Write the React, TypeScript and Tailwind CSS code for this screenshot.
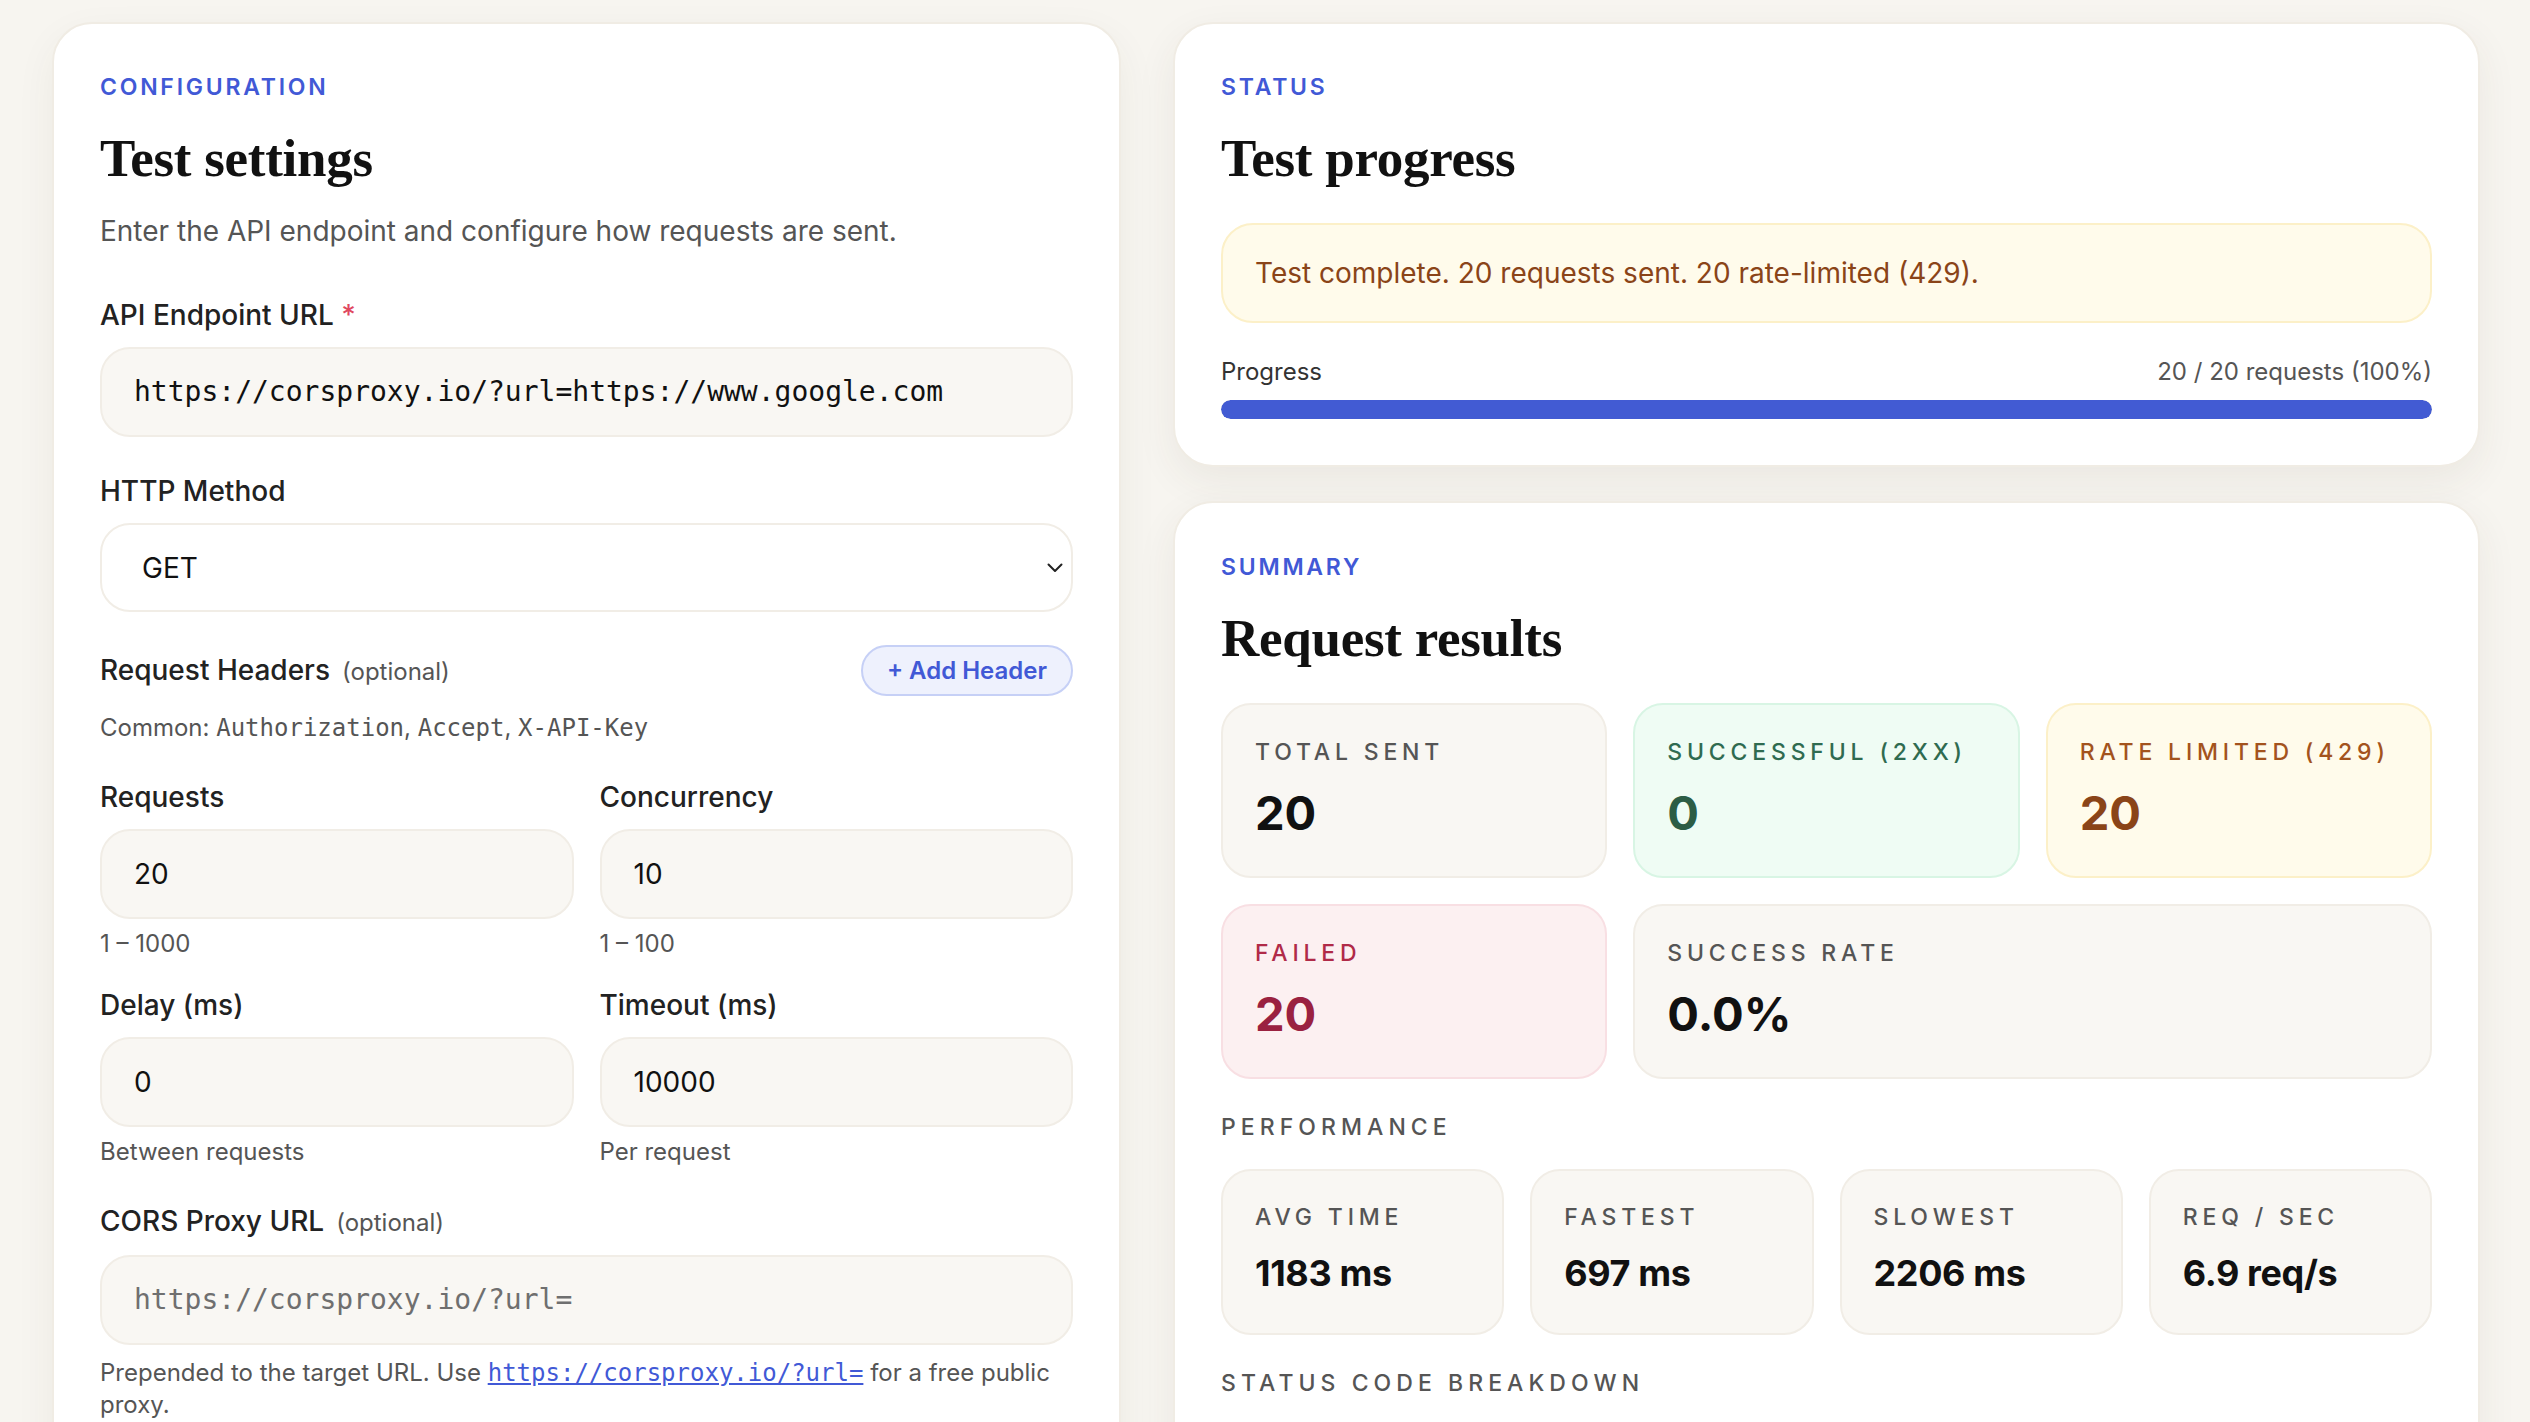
import React from "react";

const sans = { fontFamily: "Inter, 'Noto Sans', sans-serif" };
const mono = { fontFamily: "'DejaVu Sans Mono', monospace" };

const Eyebrow = ({ children }: { children: React.ReactNode }) => (
  <div className="text-[23px] leading-[32px] font-semibold tracking-[0.12em] text-[#4159d6] uppercase">{children}</div>
);

const Title = ({ children }: { children: React.ReactNode }) => (
  <h2 className="mt-[25px] text-[53px] leading-[61px] font-bold tracking-[-0.005em] text-[#111]" style={{ fontFamily: "'Liberation Serif', 'DejaVu Serif', serif" }}>
    {children}
  </h2>
);

const Label = ({ children, optional }: { children: React.ReactNode; optional?: boolean }) => (
  <div className="text-[28px] leading-[36px] font-medium text-[#222]">
    {children}
    {optional && <span className="ml-[12px] text-[24px] font-normal text-[#555]">(optional)</span>}
  </div>
);

const TextInput = ({ value, isMono, placeholder }: { value?: string; isMono?: boolean; placeholder?: boolean }) => (
  <div
    className={`mt-[14px] h-[90px] flex items-center rounded-[30px] border-2 border-[#f1ede6] bg-[#f9f7f3] px-[32px] text-[28px] ${placeholder ? "text-[#6f6f6f]" : "text-[#111]"}`}
    style={isMono ? mono : undefined}
  >
    {value}
  </div>
);

const Helper = ({ children }: { children: React.ReactNode }) => (
  <div className="mt-[9px] text-[24px] leading-[32px] text-[#555]">{children}</div>
);

const Code = ({ children }: { children: React.ReactNode }) => (
  <span style={mono} className="text-[24px]">{children}</span>
);

const stats = [
  { label: "Total sent", value: "20", box: "bg-[#f9f7f3] border-[#f1ede6]", lc: "text-[#555]", vc: "text-[#111]", span: "" },
  { label: "Successful (2xx)", value: "0", box: "bg-[#effcf4] border-[#d8f5e4]", lc: "text-[#2f6b50]", vc: "text-[#2c5d45]", span: "" },
  { label: "Rate limited (429)", value: "20", box: "bg-[#fffbeb] border-[#fcf0c8]", lc: "text-[#a3531d]", vc: "text-[#8a4418]", span: "" },
  { label: "Failed", value: "20", box: "bg-[#fcf0f1] border-[#f8dfe3]", lc: "text-[#b02a48]", vc: "text-[#9a2140]", span: "" },
  { label: "Success rate", value: "0.0%", box: "bg-[#f9f7f3] border-[#f1ede6]", lc: "text-[#555]", vc: "text-[#111]", span: "col-span-2" },
];

const perf = [
  { label: "Avg time", value: "1183 ms" },
  { label: "Fastest", value: "697 ms" },
  { label: "Slowest", value: "2206 ms" },
  { label: "Req / sec", value: "6.9 req/s" },
];

const SectionLabel = ({ children }: { children: React.ReactNode }) => (
  <div className="text-[23px] leading-[30px] font-medium tracking-[0.22em] uppercase text-[#555]">{children}</div>
);

export default function App() {
  return (
    <div className="min-h-screen bg-[#f7f5f0]" style={sans}>
      <div className="grid grid-cols-[1069px_1307px] gap-[52px] pl-[52px] pr-[50px] pt-[22px] pb-[60px] items-start">
        {/* configuration */}
        <section className="rounded-[40px] border-2 border-[#f0ece4] bg-white px-[46px] pt-[47px] pb-[48px] shadow-[0_14px_40px_rgba(70,60,40,0.06)]">
          <Eyebrow>Configuration</Eyebrow>
          <Title>Test settings</Title>
          <p className="mt-[22px] text-[28px] leading-[40px] text-[#555]">Enter the API endpoint and configure how requests are sent.</p>

          <div className="mt-[46px]">
            <Label>
              API Endpoint URL <span className="text-[#e0485f]">*</span>
            </Label>
            <TextInput isMono value="https://corsproxy.io/?url=https://www.google.com" />
          </div>

          <div className="mt-[36px]">
            <Label>HTTP Method</Label>
            <div className="relative mt-[14px] h-[89px] flex items-center rounded-[30px] border-2 border-[#f1ede6] bg-white pl-[40px] text-[28px] text-[#111]">
              GET
              <svg className="absolute right-[8px] top-1/2 -translate-y-1/2" width="16" height="10" viewBox="0 0 16 10" fill="none">
                <path d="M1.5 1.5L8 8L14.5 1.5" stroke="#222" strokeWidth="2" strokeLinecap="round" strokeLinejoin="round" />
              </svg>
            </div>
          </div>

          <div className="mt-[33px] flex items-center justify-between">
            <Label optional>Request Headers</Label>
            <button className="h-[51px] rounded-full border-2 border-[#c6d0f6] bg-[#eef1fd] px-[24px] text-[24px] font-semibold text-[#4159d6]">
              + Add Header
            </button>
          </div>
          <div className="mt-[16px] text-[24px] leading-[32px] text-[#555]">
            Common: <Code>Authorization</Code>, <Code>Accept</Code>, <Code>X-API-Key</Code>
          </div>

          <div className="mt-[35px] grid grid-cols-2 gap-x-[26px]">
            <div>
              <Label>Requests</Label>
              <TextInput value="20" />
              <Helper>1 – 1000</Helper>
            </div>
            <div>
              <Label>Concurrency</Label>
              <TextInput value="10" />
              <Helper>1 – 100</Helper>
            </div>
            <div className="mt-[27px]">
              <Label>Delay (ms)</Label>
              <TextInput value="0" />
              <Helper>Between requests</Helper>
            </div>
            <div className="mt-[27px]">
              <Label>Timeout (ms)</Label>
              <TextInput value="10000" />
              <Helper>Per request</Helper>
            </div>
          </div>

          <div className="mt-[35px]">
            <Label optional>CORS Proxy URL</Label>
            <TextInput isMono placeholder value="https://corsproxy.io/?url=" />
            <div className="mt-[12px] text-[24px] leading-[32px] text-[#555]">
              Prepended to the target URL. Use{" "}
              <a className="text-[#4159d6] underline" style={mono}>
                https://corsproxy.io/?url=
              </a>{" "}
              for a free public proxy.
            </div>
          </div>

          <button className="mt-[40px] h-[90px] w-full rounded-full bg-[#4159d6] text-[28px] font-semibold text-white">Start Test</button>
        </section>

        {/* right column */}
        <div className="flex flex-col gap-[34px]">
          <section className="rounded-[40px] border-2 border-[#f0ece4] bg-white px-[46px] pt-[47px] pb-[46px] shadow-[0_14px_40px_rgba(70,60,40,0.07)]">
            <Eyebrow>Status</Eyebrow>
            <Title>Test progress</Title>
            <div className="mt-[34px] rounded-[32px] border-2 border-[#fcf0c8] bg-[#fffbeb] px-[32px] py-[27px] text-[28px] leading-[42px] text-[#8a4418]">
              Test complete. 20 requests sent. 20 rate-limited (429).
            </div>
            <div className="mt-[33px] flex items-center justify-between text-[24px] leading-[32px]">
              <span className="text-[#333]">Progress</span>
              <span className="text-[#555]">20 / 20 requests (100%)</span>
            </div>
            <div className="mt-[12px] h-[19px] rounded-full bg-[#ece8e0] overflow-hidden">
              <div className="h-full rounded-full bg-[#425bd3]" style={{ width: "100%" }} />
            </div>
          </section>

          <section className="rounded-[40px] border-2 border-[#f0ece4] bg-white px-[46px] pt-[48px] pb-[48px] shadow-[0_14px_40px_rgba(70,60,40,0.07)]">
            <Eyebrow>Summary</Eyebrow>
            <Title>Request results</Title>
            <div className="mt-[34px] grid grid-cols-3 gap-[26px]">
              {stats.map((s) => (
                <div key={s.label} className={`rounded-[30px] border-2 px-[32px] pt-[32px] pb-[36px] ${s.box} ${s.span}`}>
                  <div className={`text-[23px] leading-[30px] font-medium tracking-[0.21em] uppercase ${s.lc}`}>{s.label}</div>
                  <div className={`mt-[19px] text-[47px] leading-[54px] font-bold ${s.vc}`}>{s.value}</div>
                </div>
              ))}
            </div>

            <div className="mt-[33px]">
              <SectionLabel>Performance</SectionLabel>
            </div>
            <div className="mt-[27px] grid grid-cols-4 gap-[26px]">
              {perf.map((p) => (
                <div key={p.label} className="rounded-[30px] border-2 border-[#f1ede6] bg-[#f9f7f3] px-[32px] pt-[31px] pb-[39px]">
                  <div className="text-[23px] leading-[30px] font-medium tracking-[0.21em] uppercase text-[#555]">{p.label}</div>
                  <div className="mt-[21px] text-[36px] leading-[41px] font-bold tracking-[-0.01em] text-[#111]">{p.value}</div>
                </div>
              ))}
            </div>

            <div className="mt-[33px]">
              <SectionLabel>Status code breakdown</SectionLabel>
            </div>
            <div className="mt-[24px] flex items-center gap-[20px] rounded-[30px] border-2 border-[#fcf0c8] bg-[#fffbeb] px-[32px] py-[24px] text-[26px] text-[#8a4418]">
              <span className="font-bold">429</span>
              <span>Too Many Requests</span>
              <span className="ml-auto font-semibold">20</span>
            </div>
          </section>
        </div>
      </div>
    </div>
  );
}
